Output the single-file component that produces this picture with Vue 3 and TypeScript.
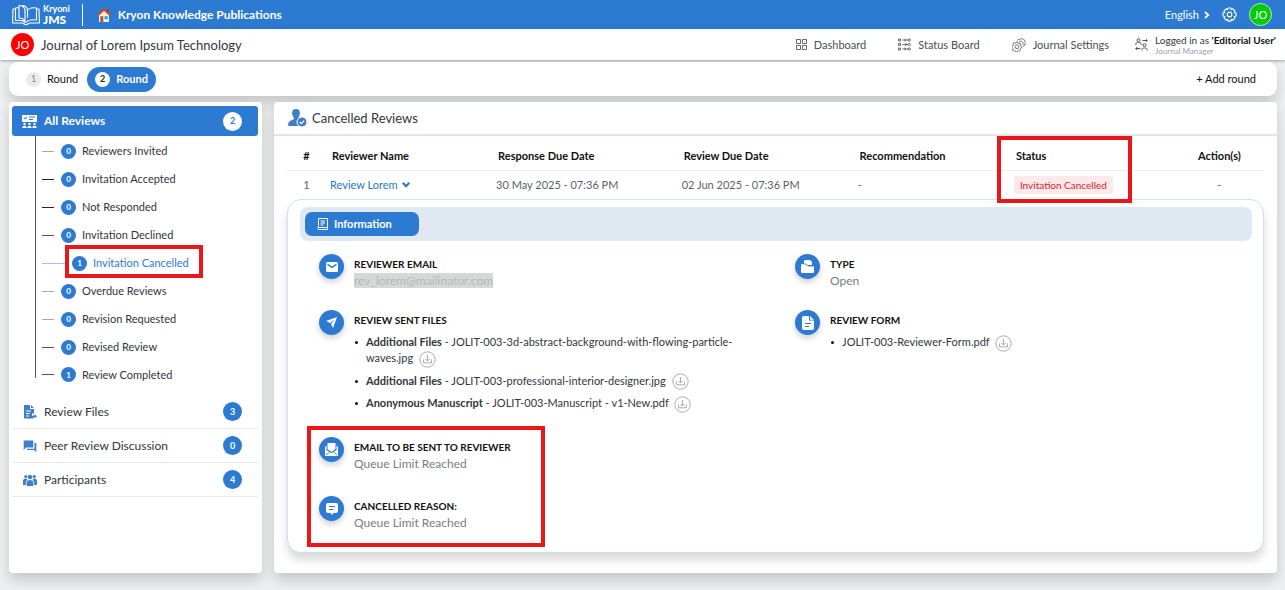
<script setup lang="ts">
interface StatusItem {
  label: string
  count: number
  tone: 'light' | 'dark' | 'mid'
  active?: boolean
}

interface SentFile {
  kind?: string
  name: string
}

const statuses: StatusItem[] = [
  { label: 'Reviewers Invited', count: 0, tone: 'light' },
  { label: 'Invitation Accepted', count: 0, tone: 'dark' },
  { label: 'Not Responded', count: 0, tone: 'dark' },
  { label: 'Invitation Declined', count: 0, tone: 'mid' },
  { label: 'Invitation Cancelled', count: 1, tone: 'mid', active: true },
  { label: 'Overdue Reviews', count: 0, tone: 'light' },
  { label: 'Revision Requested', count: 0, tone: 'light' },
  { label: 'Revised Review', count: 0, tone: 'mid' },
  { label: 'Review Completed', count: 1, tone: 'mid' },
]

const sentFiles: SentFile[] = [
  { kind: 'Additional Files', name: 'JOLIT-003-3d-abstract-background-with-flowing-particle-waves.jpg' },
  { kind: 'Additional Files', name: 'JOLIT-003-professional-interior-designer.jpg' },
  { kind: 'Anonymous Manuscript', name: 'JOLIT-003-Manuscript - v1-New.pdf' },
]

const formFiles: SentFile[] = [{ name: 'JOLIT-003-Reviewer-Form.pdf' }]
</script>

<template>
  <div class="page">
    <header class="topbar">
      <a class="logo" href="#" aria-label="Kryoni JMS">
        <svg width="28" height="22" viewBox="0 0 28 22" fill="none" stroke="#fff" stroke-width="1.1" stroke-linejoin="round">
          <path d="M3.500 5H1l-.4 14H10c1.500 0 2 1.700 4 1.700s2.500-1.700 4-1.700h9.400L27 5h-2.500" />
          <path d="M13 18.500C11 16 7.500 16 3.500 16.500V4c1.500-.4 2.500-.4 3.500-.2M14 18.500c2-2.500 6-3 10.500-2.500V4c-4-.5-7.500 0-9 2.500v7" />
          <path d="M7 14V1.500c3 .2 5.500 1.700 6 4.500v12.500C12.500 15.500 10 14 7 14zM9.500 1.800C12.500 1 15 3 15.500 6v7.500" />
        </svg>
        <span class="logo-text"><span>Kryoni</span><strong>JMS</strong></span>
      </a>
      <a class="publisher" href="#">
        <svg width="14" height="14" viewBox="0 0 14 14">
          <path d="M2 6.500 7 2l5 4.500V14H2z" fill="#f3efec" />
          <path d="M10 1h2v4l-2-1.500z" fill="#b23c17" />
          <path d="M0 7 7 .3 14 7l-1.200 1.200L7 2.900 1.200 8.200z" fill="#dc4a1a" />
          <path d="M3.300 8.200h3V14h-3z" fill="#c2532d" />
          <path d="M7.500 8.200h3.300v3H7.500z" fill="#35a4dc" />
        </svg>
        <span>Kryon Knowledge Publications</span>
      </a>
      <div class="top-tools">
        <button class="language" type="button">
          English
          <svg width="6" height="8" viewBox="0 0 6 8" fill="none" stroke="#fff" stroke-width="1.700"><path d="m1 1 3.300 3L1 7" /></svg>
        </button>
        <button class="icon-button" type="button" aria-label="Settings">
          <svg width="15" height="15" viewBox="0 0 16 16" fill="none" stroke="#fff" stroke-width="1.200" stroke-linejoin="round">
            <path d="M6.500 1h3l.5 1.800 1.600-.8 2.200 2.200-.8 1.600 2 .7v3l-2 .7.8 1.600-2.200 2.200-1.600-.8-.5 1.800h-3L6 13.200l-1.600.8-2.200-2.200.8-1.600-2-.7v-3l2-.7-.8-1.600L4.400 2l1.600.8z" />
            <circle cx="8" cy="8" r="2.500" />
          </svg>
        </button>
        <button class="avatar green" type="button">JO</button>
      </div>
    </header>

    <div class="journal-bar">
      <span class="avatar red">JO</span>
      <h1>Journal of Lorem Ipsum Technology</h1>
      <nav class="main-nav" aria-label="Journal">
        <a href="#">
          <svg width="11" height="11" viewBox="0 0 11 11" fill="none" stroke="#666"><path d="M.5.5h4v4h-4zM6.500.5h4v4h-4zM.5 6.500h4v4h-4zM6.500 6.500h4v4h-4z" /></svg>
          Dashboard
        </a>
        <a href="#">
          <svg width="13" height="13" viewBox="0 0 13 13" fill="none" stroke="#666">
            <path d="M.5 1h2v2h-2zM.5 5.500h2v2h-2zM.5 10h2v2h-2zM4.500 2H10M4.500 6.500H10M4.500 11H10" />
            <path d="M6.500.8 8 2 6.500 3.200M6.500 9.800 8 11 6.500 12.200M8.500 5.300 7 6.500l1.500 1.200" />
            <circle cx="11.300" cy="2" r="1.100" /><circle cx="11.300" cy="6.500" r="1.100" /><circle cx="11.300" cy="11" r="1.100" />
          </svg>
          Status Board
        </a>
        <a href="#">
          <svg width="14" height="14" viewBox="0 0 14 14" fill="none" stroke="#666" stroke-width=".9" stroke-linejoin="round">
            <path d="m4.200 4 1.400.1.400 1.100.8.400 1.200-.4.800 1-.5 1.100.4.900 1 .5-.1 1.300-1.100.4-.4.900.4 1.100-1 .8-1.100-.5-.9.300-.5 1-1.300-.1-.4-1.100-.9-.4-1.100.4-.8-1 .5-1.100-.3-.9-1-.5.100-1.300 1.100-.4.400-.9-.4-1.100 1-.8 1.100.5.900-.3z" />
            <circle cx="4.900" cy="8.800" r="1.900" />
            <path d="m5.300 2.600.8-1.200 1.200.3L8.300.5l1.300.6 1.200-.4.800 1.100 1.200.4v1.400l.9 1-.8 1.100.1 1.400-1.200.5-.5 1.200" />
            <path d="M7.200 3.700c1.200-.9 3-.5 3.600.7.500 1 .3 1.900-.2 2.700" />
          </svg>
          Journal Settings
        </a>
        <a class="login" href="#">
          <svg width="13" height="13" viewBox="0 0 13 13" fill="none" stroke="#555">
            <circle cx="3.500" cy="2.200" r="1.500" /><path d="M.8 7V6c0-2 5.400-2 5.400 0v1" />
            <circle cx="9.500" cy="7.200" r="1.500" /><path d="M6.800 12.500v-1c0-2 5.400-2 5.400 0v1M7.500 2.500h4.800M10.700 1l1.600 1.500L10.700 4M5.500 10.500H.8M2.300 9 .8 10.500 2.300 12" />
          </svg>
          <span class="login-text">
            <span>Logged in as <strong>'Editorial User'</strong></span>
            <small>Journal Manager</small>
          </span>
        </a>
      </nav>
    </div>

    <main class="content">
      <section class="rounds card">
        <button class="round" type="button"><span class="round-no">1</span>Round</button>
        <button class="round current" type="button"><span class="round-no">2</span>Round</button>
        <button class="add-round" type="button">+ Add round</button>
      </section>

      <div class="columns">
        <aside class="sidebar card">
          <a class="all-reviews" href="#">
            <svg width="15" height="13" viewBox="0 0 15 13" fill="#fff">
              <path fill-rule="evenodd" d="M0 0h15v7H0zM2 2.300l1 1L4.800 1.400l.6.600L3 4.500 1.400 3zM7 1.500v1h6v-1zM7 4v1h4V4z" />
              <circle cx="2.500" cy="9" r="1.200" /><circle cx="7.500" cy="9" r="1.200" /><circle cx="12.500" cy="9" r="1.200" />
              <path d="M.3 13c0-3 4.400-3 4.400 0zM5.300 13c0-3 4.400-3 4.400 0zM10.300 13c0-3 4.400-3 4.400 0z" />
            </svg>
            <span>All Reviews</span>
            <span class="count inverse">2</span>
          </a>

          <ul class="tree">
            <li v-for="item in statuses" :key="item.label" :class="[item.tone, { active: item.active }]">
              <a href="#"><span class="dot">{{ item.count }}</span>{{ item.label }}</a>
            </li>
          </ul>

          <a class="side-link" href="#">
            <svg width="14" height="14" viewBox="0 0 14 14" fill="#3f7fc8">
              <path fill-rule="evenodd" d="M1 0h6v4h4v4.500H9V11h1.500v2.500H1zM3 5.500v1h5v-1zM3 8v1h4V8zM3 10.500v1h3v-1z" />
              <path d="m8 0 3 3H8zM9.500 10.500h2V9l2.500 2.200-2.500 2.200v-1.500h-2z" />
            </svg>
            <span>Review Files</span><span class="count">3</span>
          </a>
          <a class="side-link" href="#">
            <svg width="14" height="14" viewBox="0 0 14 14" fill="#3f7fc8">
              <path d="M.7 1.500h9.600v7H3L.7 11z" /><path d="M11.500 4h1.800v9.300L11 11H4V9.700h7.500z" />
            </svg>
            <span>Peer Review Discussion</span><span class="count">0</span>
          </a>
          <a class="side-link" href="#">
            <svg width="14" height="12" viewBox="0 0 14 12" fill="#3f7fc8">
              <circle cx="7" cy="3" r="2.200" /><circle cx="2.800" cy="2.500" r="1.600" /><circle cx="11.200" cy="2.500" r="1.600" />
              <path d="M3.600 12V8.500C3.600 5 10.400 5 10.400 8.500V12zM0 11V7.500C0 5 1.500 4.300 3.800 4.700L4.500 6C2.800 7 2.800 8 2.800 11zM14 11V7.500c0-2.500-1.500-3.200-3.800-2.800L9.500 6c1.700 1 1.700 2 1.700 5z" />
            </svg>
            <span>Participants</span><span class="count">4</span>
          </a>
        </aside>

        <section class="panel card">
          <h2>
            <svg width="19" height="18" viewBox="0 0 19 18">
              <path d="M8 0c3 0 4.200 2 3.900 4.600C11.700 7 10.500 8 10.300 9.500c.2 1 3.700 1.500 4.200 4.500v3H.3c-.3-4 1-5 3.200-5.800 2-.6 2.400-1 2.300-1.700C5.500 8 4.300 7 4.100 4.600 3.800 2 5 0 8 0z" fill="#3f7fc8" />
              <circle cx="14" cy="13" r="5" fill="#3f7fc8" stroke="#fff" />
              <path d="m11.800 13 1.600 1.600 2.800-3" fill="none" stroke="#fff" stroke-width="1.300" />
            </svg>
            Cancelled Reviews
          </h2>

          <div class="panel-body">
            <table>
              <colgroup>
                <col class="c-no"><col class="c-name"><col class="c-response"><col class="c-review">
                <col class="c-recommendation"><col class="c-status"><col class="c-action">
              </colgroup>
              <thead>
                <tr>
                  <th class="no">#</th><th>Reviewer Name</th><th>Response Due Date</th><th>Review Due Date</th>
                  <th>Recommendation</th><th class="marked">Status</th><th class="action">Action(s)</th>
                </tr>
              </thead>
              <tbody>
                <tr>
                  <td class="no">1</td>
                  <td>
                    <button class="reviewer" type="button" aria-expanded="true">
                      Review Lorem
                      <svg width="8" height="6" viewBox="0 0 8 6" fill="none" stroke="#2676d0" stroke-width="2"><path d="m.7.800 3.300 3.400L7.300.800" /></svg>
                    </button>
                  </td>
                  <td>30 May 2025 - 07:36 PM</td>
                  <td>02 Jun 2025 - 07:36 PM</td>
                  <td>-</td>
                  <td><span class="badge">Invitation Cancelled</span></td>
                  <td class="action">-</td>
                </tr>
              </tbody>
            </table>

            <div class="info">
              <div class="tabs">
                <button class="tab" type="button">
                  <svg width="11" height="12" viewBox="0 0 11 12" fill="none" stroke="#fff">
                    <path d="M1.500 9.500V.5h9v11H2c-2 0-2-2 0-2h8.500M3.500 3H8M3.500 5H8M3.500 7H6.500" />
                  </svg>
                  Information
                </button>
              </div>

              <div class="details">
                <div class="detail">
                  <span class="disc"><svg width="12" height="10" viewBox="0 0 12 10"><rect width="12" height="10" rx="1.500" fill="#fff" /><path d="m1.500 2.300 4.500 3 4.500-3" fill="none" stroke="#2d7ad2" stroke-width="1.400" /></svg></span>
                  <div><h3>REVIEWER EMAIL</h3><p><span class="masked">rev_lorem@mailinator.com</span></p></div>
                </div>
                <div class="detail">
                  <span class="disc"><svg width="13" height="13" viewBox="0 0 13 13"><path d="M3 5V1.500C3 .5 3.500 0 4.500 0H9l2 2v3z" fill="#fff" /><path d="M0 5.500C0 4.500.5 4 1.500 4H5l2.500 2h4c1 0 1.500.5 1.500 1.500v4c0 1-.5 1.500-1.500 1.500h-10C.5 13 0 12.500 0 11.500z" fill="#fff" /><path d="M2.500 4H5l2.500 2H12" fill="none" stroke="#2d7ad2" stroke-width=".8" /></svg></span>
                  <div><h3>TYPE</h3><p>Open</p></div>
                </div>
                <div class="detail">
                  <span class="disc"><svg width="11" height="11" viewBox="0 0 11 11"><path d="M11 0 7 11 5 7l3.500-4.500L4 6 0 4z" fill="#fff" /></svg></span>
                  <div>
                    <h3>REVIEW SENT FILES</h3>
                    <ul class="files">
                      <li v-for="file in sentFiles" :key="file.name">
                        <strong>{{ file.kind }}</strong> - {{ file.name }}
                        <button class="download" type="button" :aria-label="'Download ' + file.name">
                          <svg width="17" height="17" viewBox="0 0 17 17" fill="none" stroke="#aaa"><circle cx="8.500" cy="8.500" r="7.700" /><path d="M8.500 4v6M6.500 8l2 2 2-2M4.500 8.500v3.300h8V8.500" /></svg>
                        </button>
                      </li>
                    </ul>
                  </div>
                </div>
                <div class="detail">
                  <span class="disc"><svg width="12" height="14" viewBox="0 0 12 14"><path d="M2 0h5v4.500h5V12c0 1.300-.7 2-2 2H2c-1.300 0-2-.7-2-2V2C0 .7.700 0 2 0zM8 0l4 3.700H8z" fill="#fff" /><path d="M3 7.500h6M3 10.500h4" stroke="#2d7ad2" stroke-width="1.200" /></svg></span>
                  <div>
                    <h3>REVIEW FORM</h3>
                    <ul class="files">
                      <li v-for="file in formFiles" :key="file.name">
                        {{ file.name }}
                        <button class="download" type="button" :aria-label="'Download ' + file.name">
                          <svg width="17" height="17" viewBox="0 0 17 17" fill="none" stroke="#aaa"><circle cx="8.500" cy="8.500" r="7.700" /><path d="M8.500 4v6M6.500 8l2 2 2-2M4.500 8.500v3.300h8V8.500" /></svg>
                        </button>
                      </li>
                    </ul>
                  </div>
                </div>
              </div>

              <div class="reasons">
                <div class="detail">
                  <span class="disc"><svg width="13" height="13" viewBox="0 0 13 13"><path d="M2.500 0h8v6l-4 3-4-3z" fill="#fff" /><path d="M0 4l1.500-1.500v4l5 3.300 5-3.300v-4L13 4v9H0z" fill="#fff" /><path d="M1.500 6.500l5 3.300 5-3.300M1 12l3.500-3M12 12 8.500 9" fill="none" stroke="#2d7ad2" stroke-width=".9" /></svg></span>
                  <div><h3>EMAIL TO BE SENT TO REVIEWER</h3><p>Queue Limit Reached</p></div>
                </div>
                <div class="detail">
                  <span class="disc"><svg width="12" height="12" viewBox="0 0 12 12"><path d="M2 0h8c1.300 0 2 .7 2 2v6c0 1.300-.7 2-2 2H7.500L6 12l-1.500-2H2C.7 10 0 9.300 0 8V2C0 .7.700 0 2 0z" fill="#fff" /><path d="M3 3.500h6M3 6.500h4" stroke="#2d7ad2" stroke-width="1.200" /></svg></span>
                  <div><h3>CANCELLED REASON:</h3><p>Queue Limit Reached</p></div>
                </div>
              </div>
            </div>
          </div>
        </section>
      </div>
    </main>
  </div>
</template>

<style>
body {
  margin: 0;
  background: #eef0f2;
}
</style>

<style scoped>
*,
*::before,
*::after {
  box-sizing: border-box;
}
.page {
  display: flex;
  flex-direction: column;
  min-height: 100vh;
  overflow: hidden;
  color: #30363c;
  font-family: Lato, "Liberation Sans", sans-serif;
  font-size: 12px;
  line-height: 16px;
}
a {
  color: inherit;
  text-decoration: none;
}
button {
  margin: 0;
  padding: 0;
  border: 0;
  background: none;
  color: inherit;
  font: inherit;
  cursor: pointer;
}
svg {
  flex: none;
}
h1, h2, h3, p, ul {
  margin: 0;
  padding: 0;
}
ul {
  list-style: none;
}
.topbar {
  display: flex;
  align-items: center;
  height: 29px;
  padding: 0 13px 0 12px;
  background: #2d7ad2;
  color: #fff;
}
.logo {
  display: flex;
  align-items: center;
  gap: 3px;
  padding-right: 12px;
  border-right: 1px solid #fff;
}
.logo-text {
  display: flex;
  flex-direction: column;
  font-size: 9px;
  font-weight: 700;
  line-height: 10px;
}
.logo-text strong {
  font-size: 12px;
  font-weight: 900;
  line-height: 12px;
}
.publisher {
  display: flex;
  align-items: center;
  gap: 7px;
  margin-left: 14px;
  font-weight: 700;
}
.top-tools {
  display: flex;
  align-items: center;
  gap: 12px;
  margin-left: auto;
}
.language {
  display: flex;
  align-items: center;
  gap: 5px;
  font-size: 11px;
}
.icon-button {
  display: flex;
}
.avatar {
  display: flex;
  align-items: center;
  justify-content: center;
  width: 23px;
  height: 23px;
  border-radius: 50%;
  color: #fff;
  font-size: 11px;
}
.green {
  border: 1px solid #b9e8cb;
  background: #0c0;
}
.red {
  background: #f00;
}
.journal-bar {
  display: flex;
  align-items: center;
  height: 31px;
  padding: 0 9px 0 11px;
  background: #fff;
  box-shadow: 0 1px 3px rgba(0, 0, 0, .35);
}
.journal-bar h1 {
  margin-left: 7px;
  font-size: 13px;
  font-weight: 400;
}
.main-nav {
  display: flex;
  align-items: center;
  gap: 32px;
  margin-left: auto;
  color: #4a4f55;
  font-size: 11px;
}
.main-nav a {
  display: flex;
  align-items: center;
  gap: 7px;
}
.main-nav .login {
  margin-left: -6px;
}
.login-text {
  display: flex;
  flex-direction: column;
  color: #30363c;
  font-size: 10px;
  line-height: 12px;
}
.login-text strong {
  color: #111;
}
.login-text small {
  color: #98a0b8;
  font-size: 8px;
  line-height: 10px;
}
.content {
  display: flex;
  flex: 1;
  flex-direction: column;
  gap: 6px;
  padding: 2px 8px 17px 9px;
}
.card {
  border-radius: 4px;
  background: #fff;
  box-shadow: 0 7px 14px rgba(0, 0, 0, .18);
}
.rounds {
  display: flex;
  align-items: center;
  height: 34px;
  padding: 0 21px 0 17px;
  border-radius: 9px;
  color: #111;
  font-size: 11px;
}
.round {
  display: flex;
  align-items: center;
  gap: 6px;
}
.round-no {
  display: flex;
  align-items: center;
  justify-content: center;
  width: 15px;
  height: 15px;
  border-radius: 50%;
  background: #ebebeb;
  color: #888;
  font-size: 9px;
}
.current {
  height: 25px;
  margin-left: 9px;
  padding: 0 8px;
  border-radius: 13px;
  background: #2d7ad2;
  color: #fff;
  font-weight: 700;
}
.current .round-no {
  background: #fff;
  color: #222;
}
.add-round {
  margin-left: auto;
}
.columns {
  display: flex;
  flex: 1;
  gap: 12px;
}
.sidebar {
  flex: none;
  width: 253px;
  padding: 4px 4px 4px 3px;
}
.all-reviews {
  display: flex;
  align-items: center;
  gap: 7px;
  height: 30px;
  padding: 0 16px 0 10px;
  border-radius: 3px;
  background: #2d7ad2;
  color: #fff;
  font-weight: 700;
}
.count {
  display: flex;
  align-items: center;
  justify-content: center;
  width: 19px;
  height: 19px;
  margin-left: auto;
  border-radius: 50%;
  background: #2d7ad2;
  color: #fff;
  font-size: 9px;
  font-weight: 700;
}
.inverse {
  background: #fff;
  color: #2d7ad2;
}
.tree {
  margin: 0 0 17px 23px;
  padding-top: 1px;
  border-left: 1px solid #555;
}
.tree li {
  display: flex;
  align-items: center;
  height: 28px;
  padding-left: 6px;
}
.tree li:last-child {
  height: 17px;
  align-items: flex-end;
}
.tree li:last-child a {
  height: 19px;
  margin-bottom: -6px;
}
.tree li:last-child::before {
  margin-bottom: 3px;
}
.tree li::before {
  width: 12px;
  height: 1px;
  margin-right: 7px;
  background: #555;
  content: "";
}
.tree .light::before {
  background: #aaa;
}
.tree .dark::before {
  background: #222;
}
.tree a {
  display: flex;
  align-items: center;
  gap: 6px;
  font-size: 11px;
}
.tree .active::before {
  width: 23px;
  background: #9fc3ec;
}
.active a {
  position: relative;
  color: #2d7ad2;
}
.active a::after {
  position: absolute;
  inset: -10px -14px -7px -7px;
  border: 4px solid #e91717;
  content: "";
}
.dot {
  display: flex;
  align-items: center;
  justify-content: center;
  width: 15px;
  height: 15px;
  border-radius: 50%;
  background: #2d7ad2;
  color: #fff;
  font-size: 8px;
  font-weight: 700;
}
.side-link {
  display: flex;
  align-items: center;
  gap: 7px;
  height: 34px;
  padding: 0 16px 0 11px;
  border-bottom: 1px solid #e8e9ea;
}
.panel {
  display: flex;
  flex: 1;
  flex-direction: column;
  min-width: 0;
}
.panel h2 {
  display: flex;
  align-items: center;
  gap: 5px;
  height: 34px;
  padding-left: 14px;
  border-bottom: 2px solid #dbe6f2;
  font-size: 13px;
  font-weight: 400;
}
.panel-body {
  display: flex;
  flex: 1;
  flex-direction: column;
  padding: 6px 13px 20px;
}
table {
  width: 100%;
  border-collapse: collapse;
  table-layout: fixed;
}
.c-no { width: 33px; }
.c-name { width: 17%; }
.c-response { width: 19%; }
.c-review { width: 18%; }
.c-recommendation { width: 16%; }
.c-status { width: 18%; }
th {
  height: 28px;
  padding: 0 0 0 12px;
  border-bottom: 1px solid #eee;
  color: #111;
  font-size: 11px;
  font-weight: 700;
  text-align: left;
}
td {
  height: 29px;
  padding: 0 0 0 10px;
  color: #5a5f65;
  font-size: 11px;
}
th.no, td.no {
  padding: 0 0 0 6px;
  text-align: center;
}
th.action, td.action {
  padding: 0 5px 0 0;
  text-align: center;
}
.marked {
  position: relative;
}
.marked::after {
  position: absolute;
  top: -6px;
  left: -7px;
  width: 135px;
  height: 67px;
  border: 4px solid #e91717;
  content: "";
}
.reviewer {
  display: flex;
  align-items: center;
  gap: 4px;
  color: #2676d0;
}
.badge {
  display: inline-block;
  padding: 1px 6px;
  border-radius: 3px;
  background: #fce9e9;
  color: #e0222c;
  font-size: 10px;
}
.info {
  flex: 1;
  padding: 7px 11px 4px 12px;
  border: 1px solid #cfe0f4;
  border-radius: 14px;
  background: #fff;
  box-shadow: 0 7px 10px rgba(0, 0, 0, .15);
}
.tabs {
  padding: 5px;
  border-radius: 8px;
  background: #e0e8f2;
}
.tab {
  display: flex;
  align-items: center;
  gap: 6px;
  width: 114px;
  height: 24px;
  padding-left: 12px;
  border-radius: 7px;
  background: #2d7ad2;
  color: #fff;
  font-size: 11px;
  font-weight: 700;
}
.details {
  display: grid;
  grid-template-columns: 1fr 1fr;
  row-gap: 21px;
  margin-top: 13px;
}
.detail {
  display: flex;
  gap: 10px;
  padding: 0 30px 0 19px;
}
.disc {
  display: flex;
  flex: none;
  align-items: center;
  justify-content: center;
  width: 25px;
  height: 25px;
  border-radius: 50%;
  background: #2d7ad2;
  box-shadow: 0 3px 6px rgba(0, 0, 0, .2);
}
.detail h3 {
  padding-top: 2px;
  color: #111;
  font-size: 10px;
  font-weight: 700;
}
.detail p {
  margin-top: 1px;
  color: #777c82;
  font-size: 12px;
}
.masked {
  background: #d6d8d8;
  color: #b4b7b7;
}
.files li {
  position: relative;
  margin: 6px 0;
  padding-left: 12px;
  font-size: 11px;
}
.files li::before {
  position: absolute;
  top: 7px;
  left: 1px;
  width: 3px;
  height: 3px;
  border-radius: 50%;
  background: #111;
  content: "";
}
.download {
  height: 17px;
  margin: -1px 0 -1px 3px;
  vertical-align: middle;
}
.download svg {
  display: block;
}
.reasons {
  display: flex;
  flex-direction: column;
  gap: 24px;
  width: 238px;
  margin: 8px 0 0 7px;
  padding: 7px 0 12px;
  border: 4px solid #e91717;
}
.reasons .detail {
  padding: 0 0 0 8px;
}
</style>
